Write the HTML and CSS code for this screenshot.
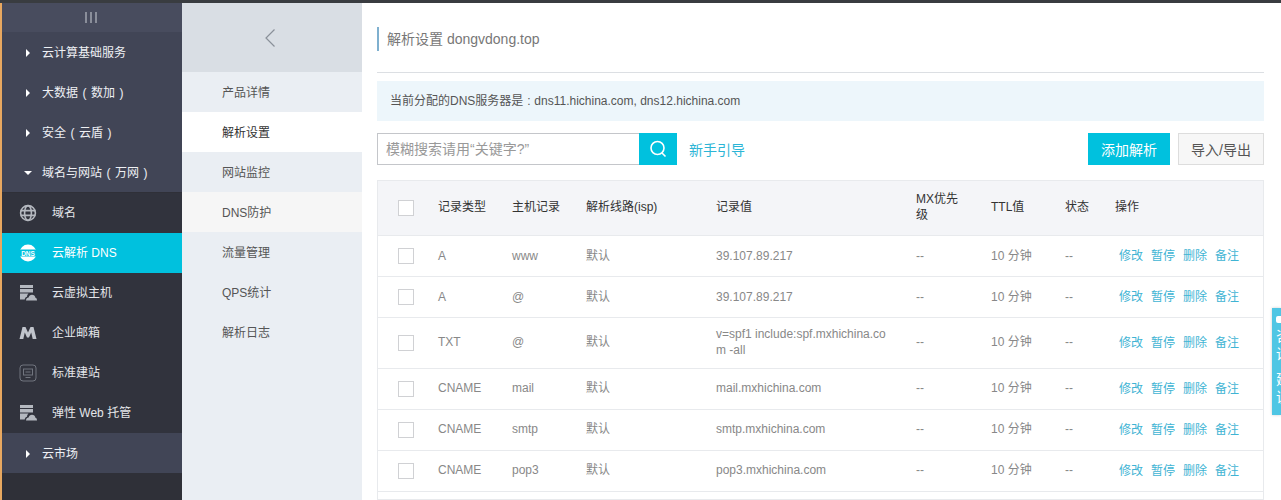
FILE: index.html
```html
<!DOCTYPE html>
<html lang="zh-CN">
<head>
  <meta charset="UTF-8">
  <title>解析设置 dongvdong.top</title>
  <link rel="stylesheet" href="styles.css">
</head>
<body>
  <div class="top-strip"></div>
  <div class="layout">
    <div class="side">
      <div class="side-toggle"><span></span><span></span><span></span></div>
      <div class="group"><i class="arrow"></i><span>云计算基础服务</span></div>
      <div class="group"><i class="arrow"></i><span>大数据<b class="wide">(</b>数加<b class="wide">)</b></span></div>
      <div class="group"><i class="arrow"></i><span>安全<b class="wide">(</b>云盾<b class="wide">)</b></span></div>
      <div class="group"><i class="arrow-down"></i><span>域名与网站<b class="wide">(</b>万网<b class="wide">)</b></span></div>
      <div class="side-list">
        <div class="side-item">
          <svg class="ico" viewBox="0 0 18 18" fill="none" stroke="#b4b8bf" stroke-width="1.6"><circle cx="9" cy="9" r="7.4"/><ellipse cx="9" cy="9" rx="3.4" ry="7.4"/><path d="M1.6 6.6h14.8M1.6 11.4h14.8"/></svg>
          <span>域名</span>
        </div>
        <div class="side-item active">
          <svg class="ico" viewBox="0 0 18 18"><circle cx="9" cy="9" r="8.4" fill="#fff"/><rect x="0" y="5.5" width="18" height="7" fill="#00c1de"/><text x="9" y="11.5" class="dns-text">DNS</text></svg>
          <span>云解析 DNS</span>
        </div>
        <div class="side-item">
          <svg class="ico" viewBox="0 0 18 18" fill="#b4b8bf"><path d="M1 1h13v3H1zM1 5h13v3.500H1zM1 9.500h8.500c-1 .8-1.500 2-1.500 3.200-1.100.2-2 1.200-2.300 2.800H1z"/><path d="M7 16.500c0-1.800 1.200-2.900 2.600-2.900.3-1.700 1.700-2.900 3.400-2.900 1.800 0 3.200 1.300 3.400 3 1 .2 1.600 1.200 1.600 2.800z"/></svg>
          <span>云虚拟主机</span>
        </div>
        <div class="side-item">
          <svg class="ico" viewBox="0 0 18 18" fill="#c0c4cc"><path d="M0.500 15L3.500 3h3L9 8.500 11.500 3h3l3 12h-3.800l-1.500-6.500L10 13.500H8L5.800 8.500 4.300 15z"/></svg>
          <span>企业邮箱</span>
        </div>
        <div class="side-item">
          <svg class="ico" viewBox="0 0 18 18" fill="none" stroke="#71757f"><rect x="1" y="1" width="16" height="16" rx="3"/><rect x="4.500" y="5" width="9" height="6"/><path d="M6.500 8h5M6.500 13.500h5"/></svg>
          <span>标准建站</span>
        </div>
        <div class="side-item">
          <svg class="ico" viewBox="0 0 18 18" fill="#b4b8bf"><path d="M1 1h13v3H1zM1 5h13v3.500H1zM1 9.500h8.500c-1 .8-1.500 2-1.500 3.200-1.100.2-2 1.200-2.300 2.800H1z"/><path d="M7 16.500c0-1.800 1.200-2.900 2.600-2.900.3-1.700 1.700-2.900 3.400-2.900 1.800 0 3.200 1.300 3.400 3 1 .2 1.600 1.200 1.600 2.800z"/></svg>
          <span>弹性 Web 托管</span>
        </div>
      </div>
      <div class="group"><i class="arrow"></i><span>云市场</span></div>
    </div>

    <div class="subnav">
      <div class="subnav-head">
        <svg width="12" height="20" viewBox="0 0 12 20" fill="none" stroke="#8a9099" stroke-width="1.200"><path d="M10.500 1.500L2 10l8.500 8.500"/></svg>
      </div>
      <div class="subnav-item">产品详情</div>
      <div class="subnav-item current">解析设置</div>
      <div class="subnav-item">网站监控</div>
      <div class="subnav-item hover">DNS防护</div>
      <div class="subnav-item">流量管理</div>
      <div class="subnav-item">QPS统计</div>
      <div class="subnav-item">解析日志</div>
    </div>

    <div class="main">
      <div class="title-bar"><h1>解析设置 dongvdong.top</h1></div>
      <div class="notice">当前分配的DNS服务器是<b class="wide">:</b>dns11.hichina.com, dns12.hichina.com</div>

      <div class="toolbar">
        <div class="search">
          <input class="search-input" placeholder="模糊搜索请用“关键字?”">
          <div class="search-btn">
            <svg width="18" height="18" viewBox="0 0 18 18" fill="none" stroke="#fff" stroke-width="1.600"><circle cx="8.500" cy="8" r="6.500"/><path d="M13 13l3.500 3.500"/></svg>
          </div>
        </div>
        <a class="guide">新手引导</a>
        <div class="toolbar-right">
          <button class="btn-primary">添加解析</button>
          <button class="btn-plain">导入/导出</button>
        </div>
      </div>

      <table class="records">
        <thead>
          <tr>
            <th class="c-check"><span class="box"></span></th>
            <th class="c-type">记录类型</th>
            <th class="c-host">主机记录</th>
            <th class="c-line">解析线路(isp)</th>
            <th class="c-value">记录值</th>
            <th class="c-mx">MX优先级</th>
            <th class="c-ttl">TTL值</th>
            <th class="c-state">状态</th>
            <th class="c-ops">操作</th>
          </tr>
        </thead>
        <tbody>
          <tr>
            <td><span class="box"></span></td><td>A</td><td>www</td><td>默认</td><td>39.107.89.217</td><td>--</td><td>10 分钟</td><td>--</td>
            <td class="ops"><a>修改</a><a>暂停</a><a>删除</a><a>备注</a></td>
          </tr>
          <tr>
            <td><span class="box"></span></td><td>A</td><td>@</td><td>默认</td><td>39.107.89.217</td><td>--</td><td>10 分钟</td><td>--</td>
            <td class="ops"><a>修改</a><a>暂停</a><a>删除</a><a>备注</a></td>
          </tr>
          <tr class="tall">
            <td><span class="box"></span></td><td>TXT</td><td>@</td><td>默认</td><td>v=spf1 include:spf.mxhichina.com -all</td><td>--</td><td>10 分钟</td><td>--</td>
            <td class="ops"><a>修改</a><a>暂停</a><a>删除</a><a>备注</a></td>
          </tr>
          <tr>
            <td><span class="box"></span></td><td>CNAME</td><td>mail</td><td>默认</td><td>mail.mxhichina.com</td><td>--</td><td>10 分钟</td><td>--</td>
            <td class="ops"><a>修改</a><a>暂停</a><a>删除</a><a>备注</a></td>
          </tr>
          <tr>
            <td><span class="box"></span></td><td>CNAME</td><td>smtp</td><td>默认</td><td>smtp.mxhichina.com</td><td>--</td><td>10 分钟</td><td>--</td>
            <td class="ops"><a>修改</a><a>暂停</a><a>删除</a><a>备注</a></td>
          </tr>
          <tr>
            <td><span class="box"></span></td><td>CNAME</td><td>pop3</td><td>默认</td><td>pop3.mxhichina.com</td><td>--</td><td>10 分钟</td><td>--</td>
            <td class="ops"><a>修改</a><a>暂停</a><a>删除</a><a>备注</a></td>
          </tr>
          <tr class="rest">
            <td colspan="9"></td>
          </tr>
        </tbody>
      </table>
    </div>
  </div>

  <div class="float-tab">
    <div class="float-icon"></div>
    <div>咨<br>询</div>
    <div class="float-gap">建<br>议</div>
  </div>
</body>
</html>
```

FILE: styles.css
```css
html {
  overflow: hidden;
}

body {
  margin: 0;
  height: 500px;
  overflow: hidden;
  background: #fff;
  font-family: "Liberation Sans", "Noto Sans CJK SC", sans-serif;
  font-size: 12px;
  color: #888;
}

/* full width brackets and colons, glyph sits in the middle of the cell */
.wide {
  display: inline-block;
  width: 11px;
  text-align: center;
  font-weight: normal;
}

.top-strip {
  height: 3px;
  background: #393c40;
}

.layout {
  display: flex;
  height: 497px;
  border-left: 2px solid #e8a860;
}

/* left dark menu */
.side {
  width: 180px;
  flex: none;
  background: #2f3038;
  color: #e8ebf0;
}

.side-toggle {
  height: 29px;
  background: #484c5e;
  display: flex;
  justify-content: center;
  align-items: center;
  gap: 3px;
  padding-right: 2px;
}

.side-toggle span {
  width: 2px;
  height: 11px;
  background: #8a8e9a;
}

.group {
  height: 40px;
  box-sizing: border-box;
  background: #414556;
  display: flex;
  align-items: center;
  padding: 2px 0 0 24px;
  color: #eef0f4;
  line-height: 16px;
}

.group .wide {
  width: 13px;
}

.arrow {
  width: 0;
  height: 0;
  border-left: 4px solid #fff;
  border-top: 4px solid transparent;
  border-bottom: 4px solid transparent;
  margin-right: 12px;
}

.arrow-down {
  width: 0;
  height: 0;
  border-top: 4px solid #fff;
  border-left: 4px solid transparent;
  border-right: 4px solid transparent;
  margin-left: -2px;
  margin-right: 10px;
}

.side-list {
  margin-top: 1px;
}

.side-item {
  height: 40px;
  box-sizing: border-box;
  display: flex;
  align-items: center;
  padding: 0 0 1px 17px;
  background: #31333d;
  color: #e4e6ea;
  line-height: 16px;
}

.side-item.active {
  background: #00c1de;
  color: #fff;
}

.ico {
  width: 18px;
  height: 18px;
  margin-right: 15px;
  flex: none;
}

.dns-text {
  font-size: 6.500px;
  font-weight: bold;
  fill: #fff;
  text-anchor: middle;
}

/* second column */
.subnav {
  width: 180px;
  flex: none;
  background: #eaeef3;
  color: #555;
}

.subnav-head {
  height: 69px;
  background: #d9dee4;
  display: flex;
  align-items: center;
  justify-content: center;
  padding-right: 5px;
  box-sizing: border-box;
}

.subnav-item {
  height: 40px;
  box-sizing: border-box;
  padding: 1px 0 0 40px;
  line-height: 40px;
}

.subnav-item.current {
  background: #fff;
  color: #333;
}

.subnav-item.hover {
  background: #f6f6f6;
}

/* content */
.main {
  flex: 1;
  padding: 0 17px 0 15px;
  min-width: 0;
}

.title-bar {
  height: 70px;
  padding-top: 24px;
  box-sizing: border-box;
  border-bottom: 1px solid #dcdfe3;
}

.title-bar h1 {
  margin: 0;
  font-size: 14px;
  font-weight: normal;
  line-height: 24px;
  height: 24px;
  color: #777;
  border-left: 2px solid #7fb0cf;
  padding-left: 8px;
}

.notice {
  margin-top: 8px;
  height: 40px;
  line-height: 40px;
  background: #edf6fb;
  padding-left: 13px;
  color: #555;
}

.toolbar {
  margin-top: 12px;
  display: flex;
  align-items: center;
  height: 32px;
}

.search {
  display: flex;
  width: 300px;
  height: 32px;
}

.search-input {
  width: 262px;
  box-sizing: border-box;
  border: 1px solid #c4c6ca;
  border-right: none;
  padding: 0 8px;
  font-family: inherit;
  font-size: 14px;
  outline: none;
}

.search-input::placeholder {
  color: #999;
}

.search-btn {
  width: 38px;
  background: #00c1de;
  display: flex;
  align-items: center;
  justify-content: center;
}

.guide {
  margin-left: 12px;
  font-size: 14px;
  color: #2cb5d6;
}

.toolbar-right {
  margin-left: auto;
  display: flex;
  gap: 8px;
}

.btn-primary, .btn-plain {
  height: 32px;
  font-family: inherit;
  font-size: 14px;
  padding: 0;
}

.btn-primary {
  width: 82px;
  background: #00c1de;
  color: #fff;
  border: none;
}

.btn-plain {
  width: 86px;
  background: #f7f7f7;
  color: #555;
  border: 1px solid #ddd;
}

.records {
  margin-top: 15px;
  width: 887px;
  table-layout: fixed;
  border-collapse: collapse;
  border: 1px solid #e8eaed;
}

.records th, .records td {
  box-sizing: border-box;
  padding: 0 10px 2px 0;
  line-height: 16px;
  word-break: break-all;
}

.records tbody tr:nth-child(-n+2) td {
  padding-bottom: 1px;
}

.records th {
  height: 55px;
  background: #f4f5f8;
  font-weight: normal;
  color: #333;
  text-align: left;
}

.records td {
  height: 41px;
  border-top: 1px solid #e8eaed;
}

.records tr.tall td {
  height: 51px;
}

.records tr.rest td {
  height: 8px;
  padding: 0;
  line-height: 0;
}

.c-check { width: 60.5px; }
.c-type { width: 74px; }
.c-host { width: 74px; }
.c-line { width: 130px; }
.c-value { width: 200px; }
.c-mx { width: 75px; }
.c-ttl { width: 74px; }
.c-state { width: 50px; }

.records .c-mx { padding-right: 30px; }
.records td:nth-child(5) { padding-right: 30px; }

.records th:first-child, .records td:first-child {
  padding: 0 0 0 20px;
}

.box {
  display: block;
  width: 14px;
  height: 14px;
  border: 1px solid #d0d1d4;
  background: #fff;
}

.records .ops {
  white-space: nowrap;
  padding-left: 4px;
  padding-right: 0;
  padding-bottom: 1px;
}

.ops a {
  color: #3fb4d4;
  margin-right: 8px;
}

/* feedback tab stuck to the right edge */
.float-tab {
  position: absolute;
  top: 308px;
  right: 0;
  width: 9px;
  height: 107px;
  overflow: hidden;
  background: #4fc6e4;
  box-shadow: 0 0 3px rgba(0, 0, 0, 0.2);
  color: #fff;
  font-size: 14px;
  line-height: 18px;
  padding: 8px 0 0 4px;
  box-sizing: border-box;
}

.float-icon {
  width: 9px;
  height: 7px;
  background: #fff;
  border-radius: 2px;
  margin-bottom: 4px;
}

.float-gap {
  margin-top: 7px;
}
```
